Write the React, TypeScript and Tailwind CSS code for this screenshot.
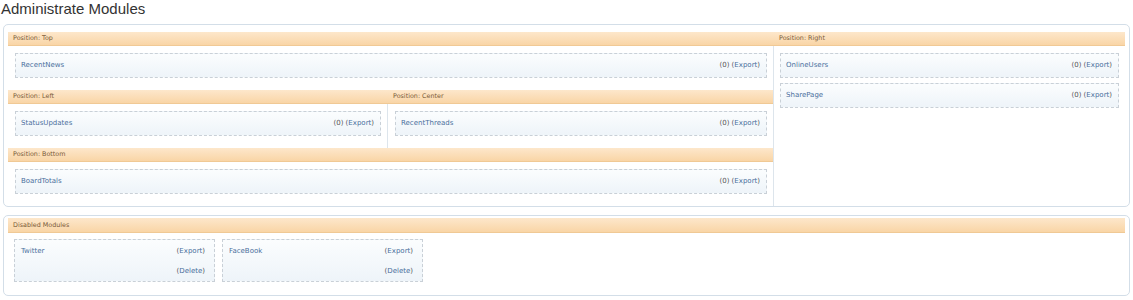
import React from "react";

function Header({ label, extra = "" }: { label: string; extra?: string }) {
  return (
    <div
      className={`h-[14px] bg-gradient-to-b from-[#fde7cb] to-[#f9d5a6] border-b border-[#f0c995] font-['DejaVu_Sans',sans-serif] text-[6.4px] leading-[13px] pl-[5px] text-[#7a5a38] ${extra}`}
    >
      {label}
    </div>
  );
}

function Module({ name }: { name: string }) {
  return (
    <div className="h-[25px] border border-dashed border-[#c9d0d7] bg-gradient-to-b from-[#fbfdfe] to-[#eef4f9] flex items-center justify-between pl-[5px] pr-[6px] font-['DejaVu_Sans',sans-serif] text-[7px]">
      <span className="text-[#4a6f9c]">{name}</span>
      <span className="text-[#555]">
        (0) (<span className="text-[#4a6f9c]">Export</span>)
      </span>
    </div>
  );
}

function DisabledModule({ name }: { name: string }) {
  return (
    <div className="w-[201px] h-[43px] border border-dashed border-[#c9d0d7] bg-gradient-to-b from-[#fbfdfe] to-[#eef4f9] pt-[6px] pl-[6px] pr-[9px] font-['DejaVu_Sans',sans-serif] text-[7px] leading-[10px]">
      <div className="flex justify-between">
        <span className="text-[#4a6f9c]">{name}</span>
        <span className="text-[#555]">
          (<span className="text-[#4a6f9c]">Export</span>)
        </span>
      </div>
      <div className="flex justify-end mt-[10px]">
        <span className="text-[#555]">
          (<span className="text-[#4a6f9c]">Delete</span>)
        </span>
      </div>
    </div>
  );
}

export default function App() {
  return (
    <div className="w-[1133px] h-[300px] bg-white font-['Liberation_Sans',Arial,sans-serif] overflow-hidden">
      <h1 className="text-[15px] leading-[18px] text-[#333] pl-[1px]">Administrate Modules</h1>

      <div className="mt-[6px] mx-[3px] border border-[#d3dee8] rounded-[5px] px-[4px] pt-[7px] flex bg-white">
        <div className="w-[765px] flex flex-col">
          <Header label="Position: Top" />
          <div className="pl-[7px] pr-[6px] pt-[7px] pb-[12px]">
            <Module name="RecentNews" />
          </div>
          <div className="flex">
            <div className="w-[379px] flex flex-col">
              <Header label="Position: Left" />
              <div className="pl-[7px] pr-[6px] pt-[7px] pb-[12px]">
                <Module name="StatusUpdates" />
              </div>
            </div>
            <div className="flex-1 flex flex-col">
              <Header label="Position: Center" extra="pl-[6px]" />
              <div className="border-l border-[#dde5ec] pl-[7px] pr-[6px] pt-[7px] pb-[12px]">
                <Module name="RecentThreads" />
              </div>
            </div>
          </div>
          <Header label="Position: Bottom" />
          <div className="pl-[7px] pr-[6px] pt-[7px] pb-[12px]">
            <Module name="BoardTotals" />
          </div>
        </div>
        <div className="flex-1 flex flex-col">
          <Header label="Position: Right" extra="pl-[6px]" />
          <div className="flex-1 border-l border-[#dde5ec] pl-[6px] pr-[6px] pt-[7px] flex flex-col gap-[5px]">
            <Module name="OnlineUsers" />
            <Module name="SharePage" />
          </div>
        </div>
      </div>

      <div className="mt-[8px] mx-[3px] border border-[#d3dee8] rounded-[5px] px-[4px] pt-[2px] bg-white">
        <Header label="Disabled Modules" extra="h-[15px] leading-[14px]" />
        <div className="flex gap-[7px] pl-[6px] pt-[6px] pb-[13px]">
          <DisabledModule name="Twitter" />
          <DisabledModule name="FaceBook" />
        </div>
      </div>
    </div>
  );
}
